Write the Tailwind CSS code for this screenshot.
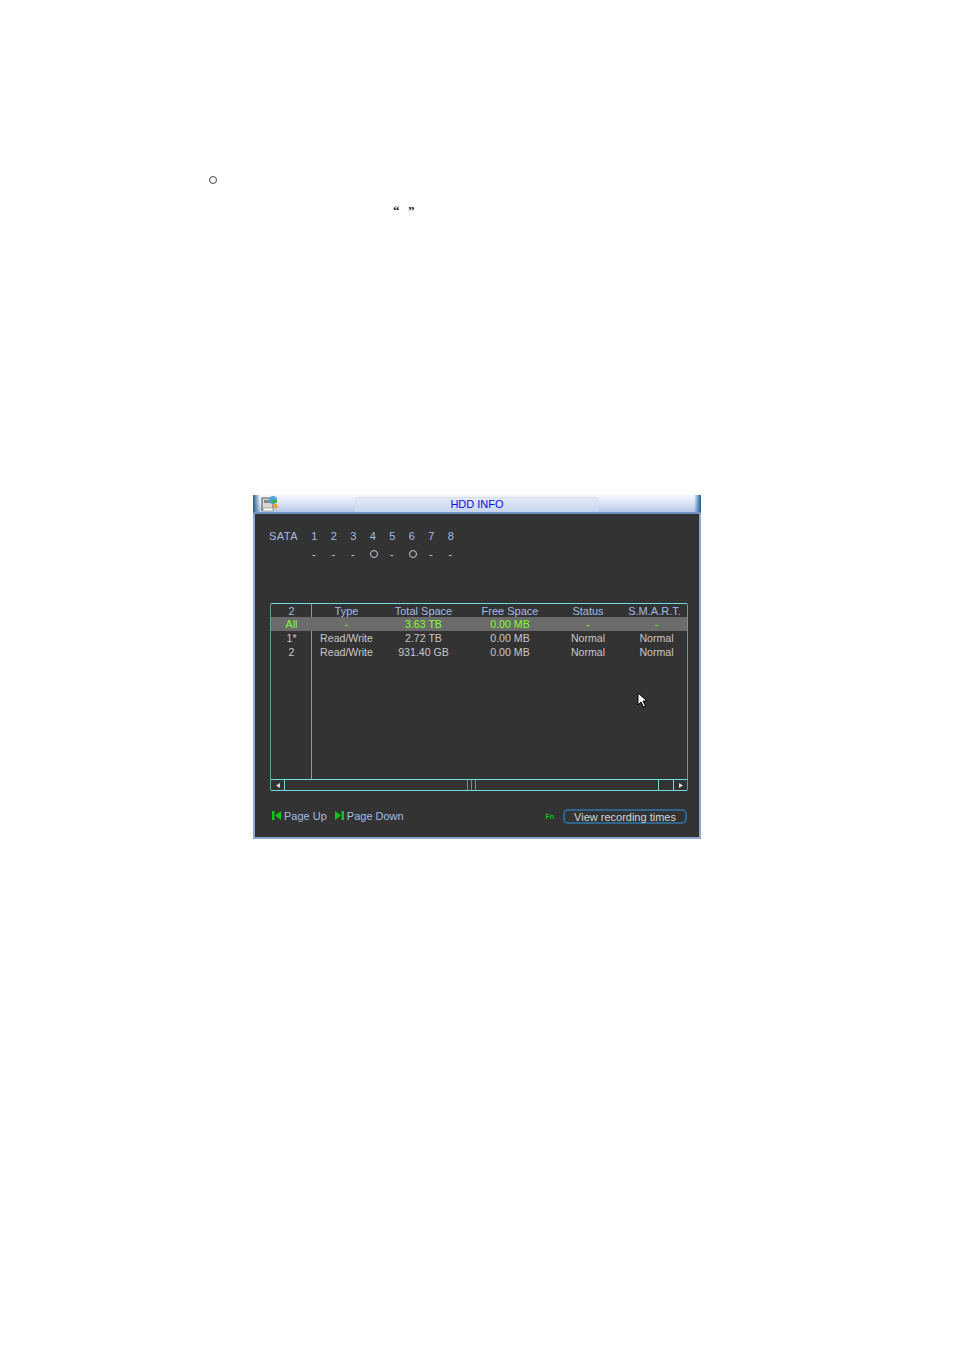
<!DOCTYPE html>
<html lang="en">
<head>
  <meta charset="UTF-8" />
  <title>HDD INFO</title>
  <script src="https://cdn.jsdelivr.net/npm/@tailwindcss/browser@4"></script>
</head>
<body class="bg-white font-['Liberation_Sans',Arial,sans-serif]">
  <div class="w-[954px] h-[1350px] overflow-hidden pt-[176px]">
    <!-- stray marks from the page text -->
    <div class="ml-[209px] w-2 h-2 rounded-full border border-[#444]"></div>
    <div class="ml-[393px] mt-[21px] h-3 flex gap-[9px] text-[13px] leading-3 font-bold font-['Liberation_Serif',serif] text-[#222]">
      <span class="w-[6px]">“</span><span class="w-[6px]">”</span>
    </div>

    <!-- dvr window -->
    <div class="ml-[253px] mt-[278px] w-[448px] h-[344px] flex flex-col">
      <div class="relative h-[19px] shrink-0 bg-gradient-to-b from-[#f6f8fe] via-[#d9e2f4] to-[#b4c8e8] border-b-2 border-[#6c93c4] flex">
        <div class="w-[7px] bg-gradient-to-r from-[#1d5a92] to-[#c5d5ee]/0"></div>
        <svg class="w-[18px] h-[17px] ml-[1px]" viewBox="0 0 18 17">
          <rect x="1" y="3" width="11" height="12" fill="#d8d8d0" stroke="#555" stroke-width="1"/>
          <rect x="3" y="5" width="7" height="3" fill="#7f8a90"/>
          <rect x="2" y="13" width="10" height="3" fill="#f4f4f0" stroke="#888" stroke-width=".5"/>
          <circle cx="12" cy="5" r="4" fill="#4fa3d8"/>
          <path d="M11 5h5v3h-5z" fill="#3cb043"/>
          <path d="M12 9h4v2h2l-3 3-3-3h0z" fill="#f0a020"/>
        </svg>
        <div class="ml-[76px] mt-[2px] w-[243px] h-[15px] border border-b-0 border-[#d5deee] rounded-t-sm bg-gradient-to-b from-[#e3eaf8] to-[#c6d5ee]"></div>
        <div class="ml-auto w-[7px] bg-gradient-to-l from-[#1d5a92] to-[#c5d5ee]/0"></div>
        <span class="absolute inset-x-0 top-[2px] text-center text-[11px] leading-[14px] text-[#0a0ae0]">HDD INFO</span>
      </div>

      <div class="flex-1 bg-[#333333] border-x-2 border-b-2 border-[#8ea6cc] pt-[15px] pl-[14px] pr-[12px] flex flex-col text-[11px] leading-[14px]">
        <div class="flex text-[#a3bce6]">
          <span class="w-[35.5px] tracking-[0.5px]">SATA</span>
          <div class="grid grid-cols-[repeat(8,19.5px)] text-center">
            <span>1</span><span>2</span><span>3</span><span>4</span><span>5</span><span>6</span><span>7</span><span>8</span>
          </div>
        </div>
        <div class="flex text-[#c5cede] mt-[4px] ml-[35px]">
          <div class="grid grid-cols-[repeat(8,19.5px)] text-center">
            <span>-</span><span>-</span><span>-</span>
            <span class="w-[8px] h-[8px] ml-[7px] mt-[3px] rounded-full border border-[#c5cede]"></span>
            <span>-</span>
            <span class="w-[8px] h-[8px] ml-[7px] mt-[3px] rounded-full border border-[#c5cede]"></span>
            <span>-</span><span>-</span>
          </div>
        </div>

        <!-- disk table -->
        <div class="mt-[42px] ml-[1px] w-[418px] h-[188px] border border-[#6fdcdc] border-l-[#5f9fa0] border-r-[#5f9fa0] rounded-[2px] flex flex-col">
          <div class="relative flex-1">
            <div class="absolute left-[40px] inset-y-0 w-px bg-[#8d97ab]"></div>
            <div class="relative grid grid-cols-[41px_69px_85px_88px_68px_65px] h-[13px] text-center text-[#a3bce6]">
              <span>2</span><span>Type</span><span>Total Space</span><span>Free Space</span><span>Status</span><span>S.M.A.R.T.</span>
            </div>
            <div class="relative grid grid-cols-[41px_69px_85px_88px_68px_65px] h-[14px] text-center text-[10.6px] bg-[#6b6b6b] text-[#7dff2e]">
              <span>All</span><span>-</span><span>3.63 TB</span><span>0.00 MB</span><span>-</span><span class="pl-1">-</span>
            </div>
            <div class="relative grid grid-cols-[41px_69px_85px_88px_68px_65px] h-[14px] text-center text-[10.6px] text-[#c8c8c8]">
              <span>1*</span><span>Read/Write</span><span>2.72 TB</span><span>0.00 MB</span><span>Normal</span><span class="pl-1">Normal</span>
            </div>
            <div class="relative grid grid-cols-[41px_69px_85px_88px_68px_65px] h-[14px] text-center text-[10.6px] text-[#c8c8c8]">
              <span>2</span><span>Read/Write</span><span>931.40 GB</span><span>0.00 MB</span><span>Normal</span><span class="pl-1">Normal</span>
            </div>
            <!-- pointer -->
            <svg class="absolute left-[366px] top-[88px] w-[12px] h-[17px]" viewBox="0 0 12 17">
              <path d="M1 1v12l3-3 2.500 5 2-1-2.500-5h4z" fill="#fff" stroke="#000" stroke-width="1"/>
            </svg>
          </div>
          <div class="h-[11px] shrink-0 border-t border-[#6fdcdc] flex items-center">
            <div class="w-[14px] h-full flex items-center justify-center border-r border-[#6fdcdc]">
              <svg class="w-[4px] h-[5px]" viewBox="0 0 4 5"><path d="M4 0v5L0 2.500z" fill="#d8d8d8"/></svg>
            </div>
            <div class="flex-1 h-full flex items-center justify-center gap-[3px]">
              <span class="w-px h-full bg-[#7d8794]"></span><span class="w-px h-full bg-[#7d8794]"></span><span class="w-px h-full bg-[#7d8794]"></span>
            </div>
            <div class="w-[15px] h-full border-l border-[#6fdcdc]"></div>
            <div class="w-[14px] h-full flex items-center justify-center border-l border-[#6fdcdc]">
              <svg class="w-[4px] h-[5px]" viewBox="0 0 4 5"><path d="M0 0v5l4-2.500z" fill="#d8d8d8"/></svg>
            </div>
          </div>
        </div>

        <!-- footer -->
        <div class="mt-[16px] ml-[3px] w-[418px] flex items-center text-[#a3bce6]">
          <svg class="w-[9px] h-[9px]" viewBox="0 0 9 9"><path d="M0 0h2.500v9H0zM9 0v9L3 4.500z" fill="#12c41a"/></svg>
          <span class="ml-[3px]">Page Up</span>
          <svg class="w-[9px] h-[9px] ml-[8px]" viewBox="0 0 9 9"><path d="M9 0H6.500v9H9zM0 0v9l6-4.500z" fill="#12c41a"/></svg>
          <span class="ml-[3px]">Page Down</span>
          <span class="ml-auto text-[7px] font-bold text-[#12c41a] mt-[2px]">Fn</span>
          <div class="ml-[9px] mr-[3px] mt-[2px] w-[124px] h-[15px] rounded-[5px] border-2 border-[#2f6690] text-center text-[#d6d6d6] leading-[12px]">View recording times</div>
        </div>
      </div>
    </div>
  </div>
</body>
</html>
